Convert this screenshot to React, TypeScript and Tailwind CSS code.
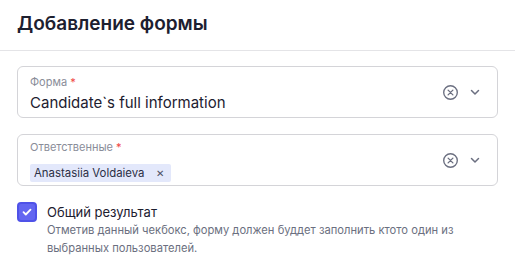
import React, { useState } from 'react';

function ClearIcon() {
  return (
    <svg width="17" height="17" viewBox="0 0 20 20" fill="none" stroke="#6b6f80" strokeWidth="1.6" strokeLinecap="round">
      <circle cx="10" cy="10" r="8" />
      <path d="M7.2 7.2l5.6 5.6M12.8 7.2l-5.6 5.6" />
    </svg>
  );
}

function Chevron() {
  return (
    <svg width="12" height="12" viewBox="0 0 12 12" fill="none" stroke="#6b6f80" strokeWidth="1.5" strokeLinecap="round" strokeLinejoin="round">
      <path d="M2.5 4.5L6 8l3.5-3.5" />
    </svg>
  );
}

function Field({ label, children }: { label: string; children: React.ReactNode }) {
  return (
    <div className="flex h-[52px] items-center rounded-md border border-[#d4d4d8] pl-3 pr-4">
      <div className="flex min-w-0 flex-1 flex-col justify-center pt-[2px]">
        <div className="text-[11px] leading-[14px] text-[#8a8d99]">
          {label} <span className="text-[#ef4444]">*</span>
        </div>
        <div className="mt-[5px]">{children}</div>
      </div>
      <div className="flex items-center gap-[10px] pl-1">
        <ClearIcon />
        <Chevron />
      </div>
    </div>
  );
}

export default function App() {
  const [checked, setChecked] = useState(true);

  return (
    <div className="h-[273px] w-[515px] bg-white font-['Inter',sans-serif] text-[#1f2233]">
      <div className="px-[17px] pb-[12px] pt-[10px]">
        <h1 className="text-[19px] font-semibold leading-[28px] text-[#1d2030]">Добавление формы</h1>
      </div>
      <div className="h-px bg-[#e4e4e7]" />

      <div className="flex flex-col gap-4 px-[17px] pt-[15px]">
        <Field label="Форма">
          <div className="text-[15px] leading-[18px] text-[#1d2030]">Candidate`s full information</div>
        </Field>

        <Field label="Ответственные">
          <span className="inline-flex h-[18px] items-center gap-[12px] rounded-[2px] bg-[#e3e8fb] pl-[4px] pr-[7px] text-[11.4px] text-[#2b2f45]">
            Anastasiia Voldaieva
            <span className="text-[10px] leading-none text-[#4b4f63]">✕</span>
          </span>
        </Field>

        <div className="flex items-start gap-[10px]">
          <button
            onClick={() => setChecked(!checked)}
            className={`flex h-[20px] w-[20px] shrink-0 items-center justify-center rounded-[4px] border-2 ${
              checked ? 'border-[#4f52e8] bg-[#6366f1]' : 'border-[#d4d4d8] bg-white'
            }`}
          >
            {checked && (
              <svg width="12" height="12" viewBox="0 0 12 12" fill="none" stroke="white" strokeWidth="1.8" strokeLinecap="round" strokeLinejoin="round">
                <path d="M2.5 6.2l2.3 2.3 4.7-4.8" />
              </svg>
            )}
          </button>
          <div className="pt-[1px]">
            <div className="text-[13px] leading-[18px] text-[#1d2030]">Общий результат</div>
            <div className="text-[11.2px] leading-[18px] text-[#6b6f80]">
              Отметив данный чекбокс, форму должен буддет заполнить ктото один из
              <br />
              выбранных пользователей.
            </div>
          </div>
        </div>
      </div>
    </div>
  );
}
